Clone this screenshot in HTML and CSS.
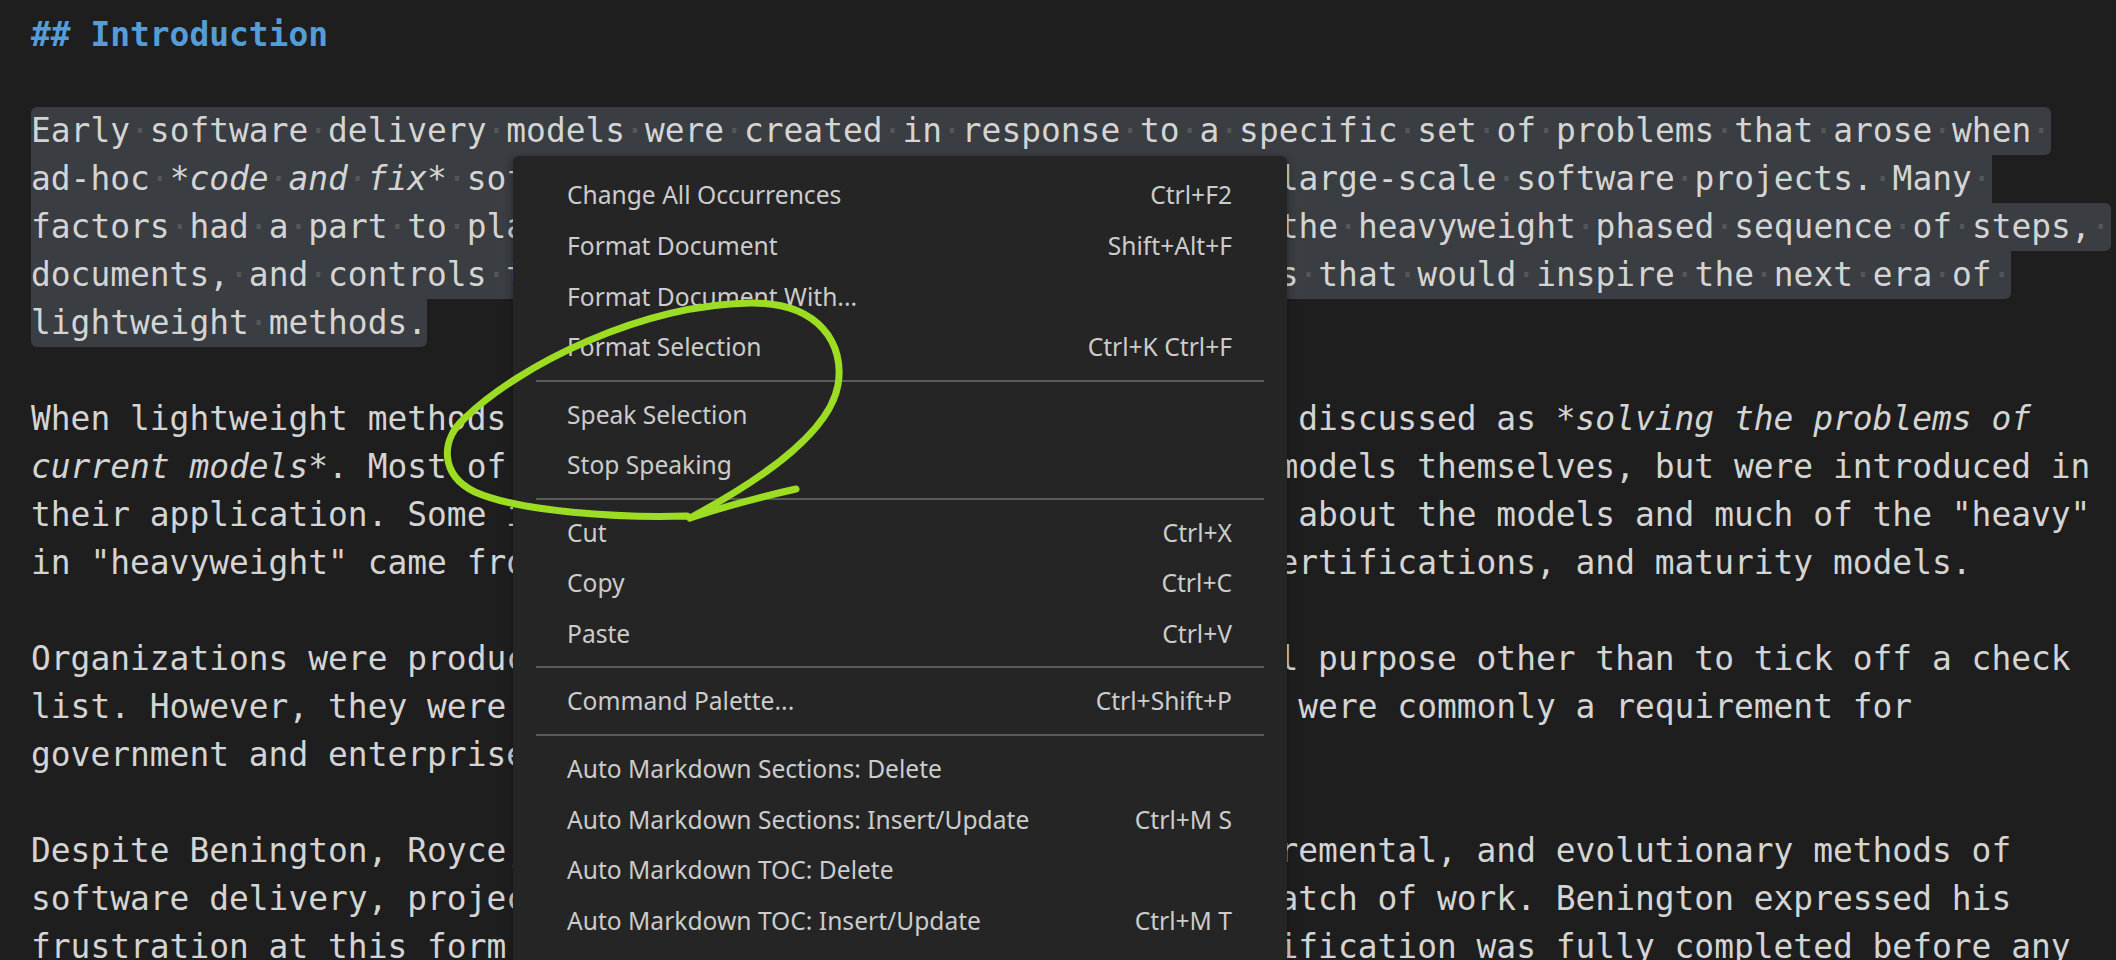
FILE: index.html
```html
<!DOCTYPE html>
<html lang="en">
<head>
<meta charset="utf-8">
<title>Editor context menu</title>
<link rel="stylesheet" href="styles.css">
</head>
<body>
<div class="editor">
  <div class="line"><span class="h">## Introduction</span></div>
  <div class="line"></div>
  <div class="line"><span class="sel s1">Early<span class="ws">·</span>software<span class="ws">·</span>delivery<span class="ws">·</span>models<span class="ws">·</span>were<span class="ws">·</span>created<span class="ws">·</span>in<span class="ws">·</span>response<span class="ws">·</span>to<span class="ws">·</span>a<span class="ws">·</span>specific<span class="ws">·</span>set<span class="ws">·</span>of<span class="ws">·</span>problems<span class="ws">·</span>that<span class="ws">·</span>arose<span class="ws">·</span>when<span class="ws">·</span></span></div>
  <div class="line"><span class="sel s2">ad-hoc<span class="ws">·</span><span class="it">*code<span class="ws">·</span>and<span class="ws">·</span>fix*</span><span class="ws">·</span>software<span class="ws">·</span>development<span class="ws">·</span>was<span class="ws">·</span>applied<span class="ws">·</span>to<span class="ws">·</span>some<span class="ws">·</span>large-scale<span class="ws">·</span>software<span class="ws">·</span>projects.<span class="ws">·</span>Many<span class="ws">·</span></span></div>
  <div class="line"><span class="sel s3">factors<span class="ws">·</span>had<span class="ws">·</span>a<span class="ws">·</span>part<span class="ws">·</span>to<span class="ws">·</span>play<span class="ws">·</span>in<span class="ws">·</span>the<span class="ws">·</span>creation<span class="ws">·</span>and<span class="ws">·</span>adoption<span class="ws">·</span>of<span class="ws">·</span>all<span class="ws">·</span>the<span class="ws">·</span>heavyweight<span class="ws">·</span>phased<span class="ws">·</span>sequence<span class="ws">·</span>of<span class="ws">·</span>steps,<span class="ws">·</span></span></div>
  <div class="line"><span class="sel s4">documents,<span class="ws">·</span>and<span class="ws">·</span>controls<span class="ws">·</span>that<span class="ws">·</span>were<span class="ws">·</span>designed<span class="ws">·</span>to<span class="ws">·</span>address<span class="ws">·</span>the<span class="ws">·</span>issues<span class="ws">·</span>that<span class="ws">·</span>would<span class="ws">·</span>inspire<span class="ws">·</span>the<span class="ws">·</span>next<span class="ws">·</span>era<span class="ws">·</span>of<span class="ws">·</span></span></div>
  <div class="line"><span class="sel s5">lightweight<span class="ws">·</span>methods.</span></div>
  <div class="line"></div>
  <div class="line">When lightweight methods first emerged, they were often broadly discussed as <span class="it">*solving the problems of</span></div>
  <div class="line"><span class="it">current models*</span>. Most of the problems were not caused by these models themselves, but were introduced in</div>
  <div class="line">their application. Some issues were caused by misunderstandings about the models and much of the "heavy"</div>
  <div class="line">in "heavyweight" came from process frameworks, standards, and certifications, and maturity models.</div>
  <div class="line"></div>
  <div class="line">Organizations were producing documentation that served no actual purpose other than to tick off a check</div>
  <div class="line">list. However, they were still produced because these documents were commonly a requirement for</div>
  <div class="line">government and enterprises contracts.</div>
  <div class="line"></div>
  <div class="line">Despite Benington, Royce, and others' support of iterative, incremental, and evolutionary methods of</div>
  <div class="line">software delivery, projects were still run as a single, large batch of work. Benington expressed his</div>
  <div class="line">frustration at this form of delivery, in which the overall specification was fully completed before any</div>
</div>

<div class="menu">
  <div class="item"><span>Change All Occurrences</span><span>Ctrl+F2</span></div>
  <div class="item"><span>Format Document</span><span>Shift+Alt+F</span></div>
  <div class="item"><span>Format Document With...</span><span></span></div>
  <div class="item"><span>Format Selection</span><span>Ctrl+K Ctrl+F</span></div>
  <div class="sep"></div>
  <div class="item"><span>Speak Selection</span><span></span></div>
  <div class="item"><span>Stop Speaking</span><span></span></div>
  <div class="sep"></div>
  <div class="item"><span>Cut</span><span>Ctrl+X</span></div>
  <div class="item"><span>Copy</span><span>Ctrl+C</span></div>
  <div class="item"><span>Paste</span><span>Ctrl+V</span></div>
  <div class="sep"></div>
  <div class="item"><span>Command Palette...</span><span>Ctrl+Shift+P</span></div>
  <div class="sep"></div>
  <div class="item"><span>Auto Markdown Sections: Delete</span><span></span></div>
  <div class="item"><span>Auto Markdown Sections: Insert/Update</span><span>Ctrl+M S</span></div>
  <div class="item"><span>Auto Markdown TOC: Delete</span><span></span></div>
  <div class="item"><span>Auto Markdown TOC: Insert/Update</span><span>Ctrl+M T</span></div>
  <div class="item"><span>Markdown: Open Preview to the Side</span><span>Ctrl+K V</span></div>
</div>

<svg class="scribble" width="2116" height="960" viewBox="0 0 2116 960" aria-hidden="true">
  <path d="M 687 516 C 620 518, 520 512, 475 492 C 440 475, 440 440, 465 418 C 520 365, 640 305, 750 303 C 820 302, 845 345, 838 385 C 830 430, 770 475, 690 518" />
  <path d="M 690 518 C 720 508, 760 497, 796 489" />
</svg>
</body>
</html>
```

FILE: styles.css
```css
html, body {
  margin: 0;
  height: 960px;
  overflow: hidden;
  background: #1e1e1e;
}

.editor {
  padding: 11px 0 0 31px;
  font-family: "DejaVu Sans Mono", "Liberation Mono", monospace;
  font-size: 32.9px;
  color: #d4d4d4;
}

.line {
  height: 48px;
  line-height: 48px;
  white-space: pre;
}

.h {
  color: #569cd6;
  font-weight: bold;
}

.it {
  font-style: italic;
}

.sel {
  display: inline-block;
  vertical-align: top;
  height: 48px;
  background: #3a3d41;
}

.s1 { border-radius: 6px 6px 6px 0; }
.s2 { border-radius: 0; }
.s3 { border-radius: 0 6px 6px 0; }
.s4 { border-radius: 0 0 6px 0; }
.s5 { border-radius: 0 0 6px 6px; }

.ws {
  color: rgba(227, 228, 226, 0.18);
}

.menu {
  position: absolute;
  left: 513px;
  top: 156px;
  width: 774px;
  height: 860px;
  box-sizing: border-box;
  padding-top: 13px;
  background: #252526;
  border-radius: 6px;
  box-shadow: 0 2px 8px rgba(0, 0, 0, 0.36);
  font-family: "Noto Sans", "Open Sans", sans-serif;
  font-size: 24.6px;
  color: #cccccc;
}

.item {
  display: flex;
  justify-content: space-between;
  align-items: center;
  height: 50.83px;
  padding: 0 55px 0 54px;
  white-space: nowrap;
}

.sep {
  height: 2px;
  margin: 7.2px 23px;
  background: #5a5a5a;
}

.scribble {
  position: absolute;
  left: 0;
  top: 0;
  pointer-events: none;
}

.scribble path {
  fill: none;
  stroke: #9cdc22;
  stroke-width: 7;
  stroke-linecap: round;
  stroke-linejoin: round;
}
```
